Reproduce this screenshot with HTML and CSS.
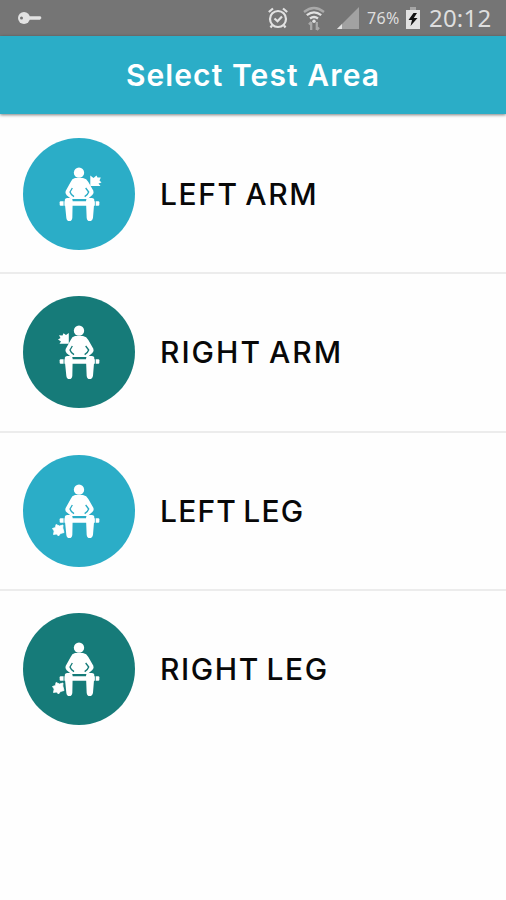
FILE: index.html
```html
<!DOCTYPE html>
<html lang="en">
<head>
<meta charset="utf-8">
<title>Select Test Area</title>
<link rel="stylesheet" href="styles.css">
</head>
<body>
<svg class="defs" width="0" height="0" aria-hidden="true">
  <symbol id="person" viewBox="0 0 210 225">
    <circle cx="102" cy="53" r="15.5"/>
    <path d="M90 69H114Q125 71 130 81L145 107Q148 115 142 120L128 132H79L65 121Q59 116 62 108L77 81Q81 71 90 69Z"/>
    <rect x="44" y="139" width="119" height="13" rx="3"/>
    <path d="M59 139Q59 129 67 129H74Q83 129 83 139L82 188Q81 198 73 198Q65 198 64 188Z"/>
    <path d="M123 139Q123 129 132 129H140Q149 129 148 139L144 188Q142 198 134 198Q126 198 125 188Z"/>
    <path class="cut" d="M82 99L75 111Q77 118 87 125M122 99L131 111Q129 118 119 125"/>
    <path class="cut thin" d="M85 135H121M57 136V154M151 136V154"/>
  </symbol>
</svg>
<header class="status">
  <svg class="key" viewBox="0 0 26 16"><circle cx="7" cy="8" r="6"/><path d="M11 6.2H23.5L24.5 8L23 9.8H11Z"/><circle class="hole" cx="4.5" cy="8" r="1.5"/></svg>
  <svg class="alarm" viewBox="0 0 22 24"><circle cx="11" cy="13" r="8"/><path d="M1.8 6L6 2.5M20.2 6L16 2.5M5 19.5L3.5 21.5M17 19.5L18.5 21.5M7.5 12.5L10.5 15.3L15 10.5"/></svg>
  <svg class="wifi" viewBox="0 0 24 26"><path class="dim" d="M2 7Q12-1 22 7"/><path d="M4.8 10.2Q12 4.5 19.2 10.2M8 13.5Q12 10.5 16 13.5"/><circle cx="12" cy="16.2" r="1.7"/><path class="dim" d="M9.2 17V25M7 19.5L9.2 17M14.8 17V25M17 22.5L14.8 25"/></svg>
  <svg class="signal" viewBox="0 0 24 24"><path class="dim" d="M23 1V23H1Z"/><path d="M1 23L6 18V23Z"/></svg>
  <span class="percent">76%</span>
  <svg class="battery" viewBox="0 0 16 23"><path class="cap" d="M5 0H11V3H5Z"/><path d="M1 3H15V22H1Z"/><path class="bolt" d="M8.5 6L3.5 13H7L5.5 19L12.5 11H8.8L12 6Z"/></svg>
  <time class="clock">20:12</time>
</header>
<div class="titlebar"><h1>Select Test Area</h1></div>
<main class="areas">
  <div class="area">
    <svg class="badge" viewBox="0 0 112 112"><circle class="disc" cx="56" cy="56" r="56"/><use href="#person" x="22" y="17" width="70" height="75"/><path d="M67.3 37.5L70.5 40L73.5 37.5L74.5 39.5L77.8 39.5L76.5 42.5L78.5 44.5L75.5 45.5L77.5 48H67.3Z"/></svg>
    <span class="label left-arm">LEFT ARM</span>
  </div>
  <div class="area dark">
    <svg class="badge" viewBox="0 0 112 112"><circle class="disc" cx="56" cy="56" r="56"/><use href="#person" x="22" y="17" width="70" height="75"/><path d="M45.8 37V47.7H36.5L38 45.5L35 43.5L37.5 42L36 39.2L39.5 39.5L40.5 37.2L43 39Z"/></svg>
    <span class="label right-arm">RIGHT ARM</span>
  </div>
  <div class="area">
    <svg class="badge" viewBox="0 0 112 112"><circle class="disc" cx="56" cy="56" r="56"/><use href="#person" x="22" y="17" width="70" height="75"/><path class="leg-mark" d="M33 69.5L36.5 71L40 70L39.8 73L41 77.5L37.5 78.5L35.5 81L33.5 79L30.5 79.5L31.2 76L29.5 73.5L32.5 72.5Z"/></svg>
    <span class="label left-leg">LEFT LEG</span>
  </div>
  <div class="area dark">
    <svg class="badge" viewBox="0 0 112 112"><circle class="disc" cx="56" cy="56" r="56"/><use href="#person" x="22" y="17" width="70" height="75"/><path class="leg-mark" d="M33 69.5L36.5 71L40 70L39.8 73L41 77.5L37.5 78.5L35.5 81L33.5 79L30.5 79.5L31.2 76L29.5 73.5L32.5 72.5Z"/></svg>
    <span class="label right-leg">RIGHT LEG</span>
  </div>
</main>
</body>
</html>
```
FILE: styles.css
```css
* { box-sizing: border-box; }
body { margin: 0; background: #fefefe; font-family: Inter, "Liberation Sans", sans-serif; }
.defs { display: block; height: 0; }
.status { height: 36px; background: #757575; color: #dedede; display: flex; align-items: center; font-family: "Noto Sans", sans-serif; }
.status svg { flex: none; fill: #e2e2e2; }
.key { width: 26px; height: 16px; margin-left: 17px; }
.key .hole { fill: #757575; }
.status .alarm { width: 22px; height: 24px; margin-left: 224px; fill: none; stroke: #e2e2e2; stroke-width: 2.2; }
.wifi { width: 24px; height: 26px; margin-left: 13px; }
.wifi path { fill: none; stroke: #e2e2e2; stroke-width: 2.3; }
.wifi .dim { stroke: #a9a9a9; }
.signal { width: 24px; height: 24px; margin-left: 10px; }
.signal .dim { fill: #a2a2a2; }
.percent { font-size: 16px; width: 34px; margin-left: 7px; letter-spacing: .3px; }
.battery { width: 16px; height: 23px; margin-left: 4px; }
.battery .cap { fill: #a5a5a5; }
.battery .bolt { fill: #111; }
.clock { font-size: 24px; line-height: 34px; margin-left: 8px; letter-spacing: .2px; }
.titlebar { position: relative; height: 78px; background: #2badc7; box-shadow: 0 1px 3px rgba(0,0,0,.5); display: flex; align-items: center; justify-content: center; }
h1 { margin: 0; color: #fff; font-size: 30px; font-weight: 600; line-height: 36px; letter-spacing: 1.1px; }
.area { height: 158.5px; padding: 1px 23px 0; display: flex; align-items: center; border-bottom: 2px solid #ececec; }
.area.dark { padding-top: 0; }
.area:first-child { height: 160px; }
.area:last-child { border-bottom-color: transparent; }
.badge { width: 112px; height: 112px; flex: none; fill: #fff; color: #2badc7; }
.disc { fill: currentColor; }
.dark .badge { color: #167b79; }
.cut { fill: none; stroke: currentColor; stroke-width: 4; }
.thin { stroke-width: 2.5; }
.leg-mark { stroke: #fff; stroke-width: .8; stroke-linejoin: round; }
.label { margin-left: 25px; color: #080808; font-size: 30px; font-weight: 500; word-spacing: -3px; white-space: nowrap; }
.left-arm { letter-spacing: 1.6px; }
.right-arm { letter-spacing: 2px; }
.left-leg { letter-spacing: 1.2px; }
.right-leg { letter-spacing: 1.6px; }
```
